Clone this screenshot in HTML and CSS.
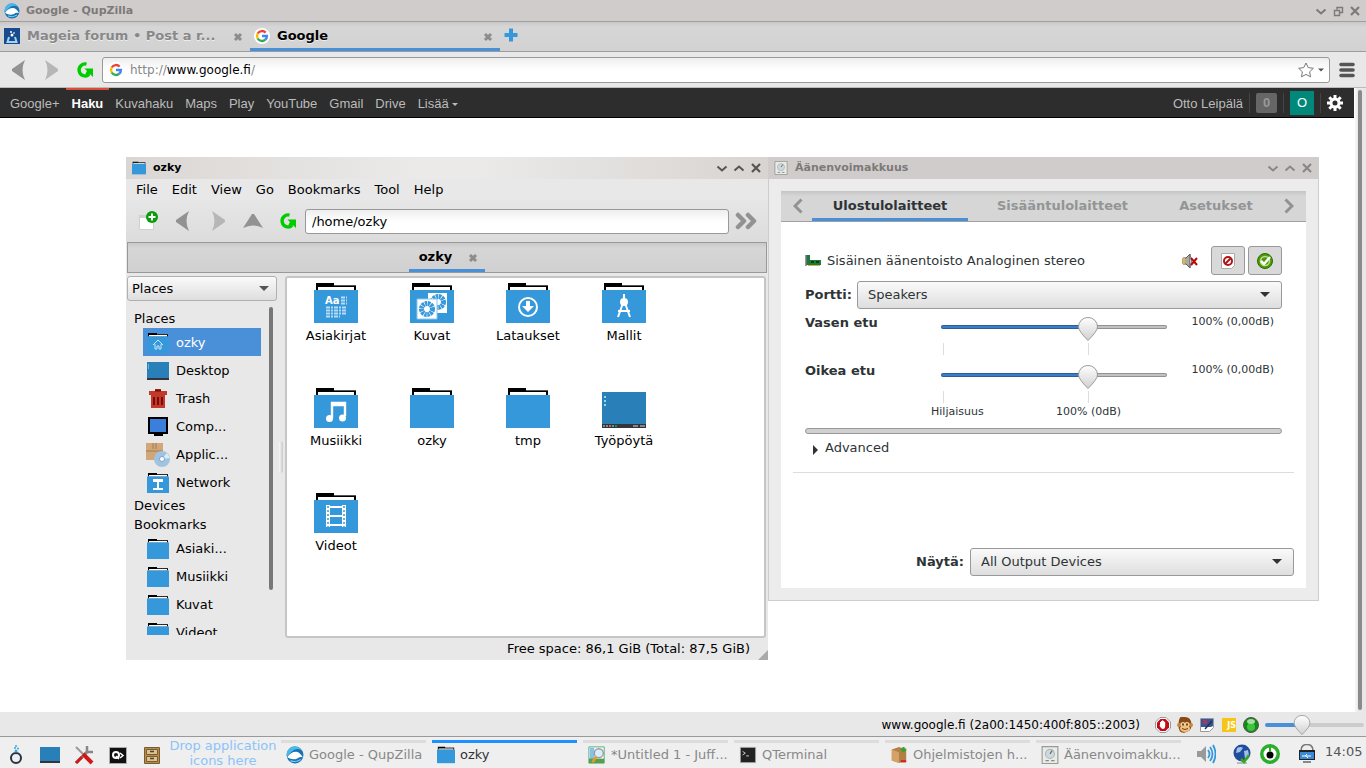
FILE: index.html
```html
<!DOCTYPE html>
<html lang="fi">
<head>
  <meta charset="UTF-8">
  <title>Google - QupZilla</title>
  <link rel="stylesheet" href="styles.css">
</head>
<body>
  <!-- shared icons -->
  <svg class="defs" width="0" height="0" aria-hidden="true">
    <symbol id="folder" viewBox="0 0 44 40">
      <path d="M2 0h18v2h22v5H2z" fill="#000"/>
      <path d="M4 4h36v3H4z" fill="#fff"/>
      <path d="M20 2h22v1H20z" fill="#555"/>
      <path d="M0 7h44v33H0z" fill="#3498db"/>
    </symbol>
    <symbol id="screen" viewBox="0 0 44 36">
      <path d="M0 0h44v36H0z" fill="#2980b9"/>
      <path d="M0 32h44v4H0z" fill="#34343c"/>
      <path d="M2 4h2v2H2zM2 8h2v2H2zM2 12h2v2H2z" fill="#8fdcdc"/>
      <path d="M1 33h2v2H1zM4 33h2v2H4zM31 33h5v2h-5zM38 33h5v2h-5z" fill="#888"/>
      <path d="M7 33h2v2H7z" fill="#e8622c"/><path d="M10 33h2v2h-2z" fill="#2c9be8"/><path d="M13 33h2v2h-2z" fill="#2a8a3a"/>
    </symbol>
    <symbol id="qupzilla" viewBox="0 0 16 16">
      <circle cx="8" cy="8" r="7.5" fill="#1673b5"/>
      <path d="M1 9A7 7 0 0 1 14 4Q9 1 5 5z" fill="#4bb8e8"/>
      <path d="M1 10Q4 5 9 5q3 0 6 5-3-1-5 1-4 2-9-1" fill="#fff"/>
      <path d="M4 13q5 2 9-1" fill="none" stroke="#7fd0ef"/>
    </symbol>
    <symbol id="google" viewBox="0 0 16 16">
      <circle cx="8" cy="8" r="8" fill="#fff"/>
      <g fill="none" stroke-width="2.4">
        <path d="M11.6 4.6A5 5 0 0 0 3.7 5.5" stroke="#ea4335"/>
        <path d="M3.7 5.5a5 5 0 0 0 0 5" stroke="#fbbc05"/>
        <path d="M3.7 10.5a5 5 0 0 0 7.6 1.2" stroke="#34a853"/>
        <path d="M11.3 11.7A5 5 0 0 0 12.9 8H8" stroke="#4285f4"/>
      </g>
    </symbol>
    <symbol id="back" viewBox="0 0 14 20"><path d="M13 0Q8 10 13 20L0 11V9z" fill="currentColor"/></symbol>
    <symbol id="forward" viewBox="0 0 14 20"><path d="M1 0q5 10 0 20l13-9V9z" fill="currentColor"/></symbol>
    <symbol id="reload" viewBox="0 0 18 18">
      <path d="M10.5 3.1A6 6 0 1 0 13 13.500" fill="none" stroke="#0c0" stroke-width="3.4"/>
      <path d="M8.500 7.500H17V16l-2.600-2.600-3.400 1-1.500-2 1.500-2.400z" fill="#0c0"/>
    </symbol>
    <symbol id="min" viewBox="0 0 12 12"><path d="M1.500 4.500 6 8.500l4.500-4" fill="none" stroke="currentColor" stroke-width="2"/></symbol>
    <symbol id="max" viewBox="0 0 12 12"><path d="M1.500 8.500 6 4.500l4.500 4" fill="none" stroke="currentColor" stroke-width="2"/></symbol>
    <symbol id="close" viewBox="0 0 12 12"><path d="m2 2 8 8m0-8-8 8" fill="none" stroke="currentColor" stroke-width="2.200"/></symbol>
    <symbol id="tabclose" viewBox="0 0 12 12"><path d="m3 3 6 6m0-6-6 6" fill="none" stroke="#8c8c8c" stroke-width="3"/></symbol>
    <symbol id="mixer" viewBox="0 0 16 16">
      <path d="M1 .5h14v15H1z" fill="#e8ece4" stroke="#999"/>
      <circle cx="8" cy="7" r="4" fill="#cdd9dd" stroke="#b0b8b8"/><path d="m8 7 2-3" stroke="#567"/>
      <path d="M4 13h3m2 0h3" stroke="#888"/>
    </symbol>
  </svg>

  <header class="titlebar">
    <svg class="i16"><use href="#qupzilla"/></svg>
    <h1>Google - QupZilla</h1>
    <div class="wbtns">
      <button aria-label="Minimize"><svg><use href="#min"/></svg></button>
      <button aria-label="Restore"><svg viewBox="0 0 12 12"><path d="M2.500 5.500h5v5h-5zM5 4.500V2.500h5.500v5H8" fill="none" stroke="currentColor" stroke-width="1.400"/></svg></button>
      <button aria-label="Close"><svg><use href="#close"/></svg></button>
    </div>
  </header>

  <nav class="tabs">
    <div class="tab">
      <svg class="i16" viewBox="0 0 16 16"><path d="M0 0h16v16H0z" fill="#194a8d"/><path d="M5 9 3.500 14h9L11 9" fill="none" stroke="#9fd4f5" stroke-width="2"/><circle cx="8" cy="7" r="1.500" fill="#fff"/><circle cx="7" cy="4" r="1" fill="#fff"/><circle cx="10" cy="5" r="1" fill="#9fd4f5"/></svg>
      <span>Mageia forum • Post a r...</span>
      <button aria-label="Close tab"><svg class="i12"><use href="#tabclose"/></svg></button>
    </div>
    <div class="tab current">
      <svg class="i16"><use href="#google"/></svg>
      <span>Google</span>
      <button aria-label="Close tab"><svg class="i12"><use href="#tabclose"/></svg></button>
    </div>
    <button class="newtab" aria-label="New tab"><svg viewBox="0 0 14 14"><path d="M7 0.500v13M0.500 7h13" stroke="#3498db" stroke-width="4"/></svg></button>
  </nav>

  <div class="navbar">
    <button class="nav" aria-label="Back"><svg class="arrow"><use href="#back"/></svg></button>
    <button class="nav off" aria-label="Forward"><svg class="arrow"><use href="#forward"/></svg></button>
    <button class="nav" aria-label="Reload"><svg class="i18"><use href="#reload"/></svg></button>
    <div class="urlbox">
      <svg class="i16"><use href="#google"/></svg>
      <a href="#" class="url"><span>http://</span>www.google.fi<span>/</span></a>
      <svg class="i16" viewBox="0 0 16 16"><path d="m8 1 2.200 4.600 5.100.7-3.700 3.500.9 5L8 12.400l-4.500 2.400.9-5L.7 6.300l5.100-.7z" fill="#fff" stroke="#777"/></svg>
      <svg class="caret" viewBox="0 0 6 4"><path d="M0 .5h6L3 3.500z" fill="#555"/></svg>
    </div>
    <button class="menu" aria-label="Menu"><svg viewBox="0 0 16 16"><path d="M2 2.500h12M2 8h12M2 13.500h12" stroke="#555" stroke-width="3.600" stroke-linecap="round"/></svg></button>
  </div>

  <div class="viewport">
    <main class="page">
      <div class="gbar">
        <a href="#">Google+</a>
        <a href="#" class="on">Haku</a>
        <a href="#">Kuvahaku</a>
        <a href="#">Maps</a>
        <a href="#">Play</a>
        <a href="#">YouTube</a>
        <a href="#">Gmail</a>
        <a href="#">Drive</a>
        <a href="#">Lisää <i class="down"></i></a>
        <a href="#" class="user">Otto Leipälä</a>
        <span class="sep"><button class="notif">0</button></span>
        <span class="sep"><button class="avatar">O</button></span>
        <span class="sep"><button class="gear" aria-label="Settings"><svg class="i16" viewBox="0 0 16 16"><circle cx="8" cy="8" r="4" fill="none" stroke="#fff" stroke-width="3"/><path d="M8 0v3m0 10v3M0 8h3m10 0h3M2.300 2.300l2.200 2.200m7 7 2.200 2.200m0-11.400-2.200 2.200m-7 7-2.200 2.200" stroke="#fff" stroke-width="3"/></svg></button></span>
      </div>

      <!-- file manager -->
      <section class="window files">
        <div class="wtitle">
          <svg class="i14"><use href="#folder"/></svg>
          <h2>ozky</h2>
          <div class="wbtns">
            <button aria-label="Minimize"><svg><use href="#min"/></svg></button>
            <button aria-label="Maximize"><svg><use href="#max"/></svg></button>
            <button aria-label="Close"><svg><use href="#close"/></svg></button>
          </div>
        </div>
        <div class="menubar">
          <button>File</button><button>Edit</button><button>View</button><button>Go</button><button>Bookmarks</button><button>Tool</button><button>Help</button>
        </div>
        <div class="toolbar">
          <button class="tool" aria-label="New tab"><svg class="i20" viewBox="0 0 20 20"><path d="M1 4h15v15H1z" fill="#d0d0d0"/><path d="M2 7h13v11H2z" fill="#fff"/><circle cx="14" cy="6" r="6" fill="#0a9d0a"/><path d="M14 2.500v7M10.500 6h7" stroke="#fff" stroke-width="2"/></svg></button>
          <button class="tool" aria-label="Back"><svg class="arrow"><use href="#back"/></svg></button>
          <button class="tool off" aria-label="Forward"><svg class="arrow"><use href="#forward"/></svg></button>
          <button class="tool" aria-label="Up"><svg class="up" viewBox="0 0 20 14"><path d="M9 0h2l9 14q-10-5-20 0z" fill="currentColor"/></svg></button>
          <button class="tool" aria-label="Reload"><svg class="i18"><use href="#reload"/></svg></button>
          <input type="text" value="/home/ozky" aria-label="Path">
          <button class="more" aria-label="Go"><svg viewBox="0 0 22 18"><path d="m3 3 6 6-6 6M13 3l6 6-6 6" fill="none" stroke="currentColor" stroke-width="4.500" stroke-linejoin="round" stroke-linecap="round"/></svg></button>
        </div>
        <div class="ftabs"><div class="ftab"><span>ozky</span><button aria-label="Close tab"><svg class="i12"><use href="#tabclose"/></svg></button></div></div>
        <div class="fbody">
          <aside class="side">
            <div class="select"><select aria-label="Side pane"><option>Places</option></select></div>
            <div class="places">
              <div class="placelist">
                <h3>Places</h3>
                <a href="#" class="picked"><svg viewBox="0 0 22 20"><use href="#folder"/><path d="m6 12 5-5 5 5m-8-1v5h2v-3h2v3h2v-5" fill="none" stroke="#cfe6f6"/></svg>ozky</a>
                <a href="#"><svg viewBox="0 0 22 20"><path d="M0 1h22v18H0z" fill="#2980b9"/><path d="M0 17h22v2H0z" fill="#34343c"/><path d="M1.500 3v5" stroke="#6bc"/></svg>Desktop</a>
                <a href="#"><svg viewBox="0 0 22 20"><path d="M8 0h6v2h6v4H2V2h6z" fill="#c0392b"/><path d="M4 6h14v13H4z" fill="#c0392b"/><path d="M7 8v8m4-8v8m4-8v8M8 1.500h6" stroke="#7b0a0a" stroke-width="2"/></svg>Trash</a>
                <a href="#"><svg viewBox="0 0 22 20"><path d="M1 0h20v17h-5v2H7v-2H1z" fill="#000"/><path d="M3 2h16v13H3z" fill="#3b7fdd"/></svg>Comp...</a>
                <a href="#"><svg class="apps" viewBox="0 0 24 24"><path d="M0 0h17v17H0z" fill="#d1a679"/><path d="M0 8h17M7 0v6m3-6v6" stroke="#a67c50"/><circle cx="16" cy="16" r="8" fill="#9fc3e0"/><path d="m16 16 5-6 3 5z" fill="#d9ecf9"/><circle cx="16" cy="16" r="2.500" fill="#fff" stroke="#7ba4c6"/></svg>Applic...</a>
                <a href="#"><svg viewBox="0 0 22 20"><use href="#folder"/><path d="M6 6h10v3H6zM10 9h2v6h4v2H6v-2h4z" fill="#fff"/></svg>Network</a>
                <h3>Devices</h3>
                <h3>Bookmarks</h3>
                <a href="#"><svg><use href="#folder"/></svg>Asiaki...</a>
                <a href="#"><svg><use href="#folder"/></svg>Musiikki</a>
                <a href="#"><svg><use href="#folder"/></svg>Kuvat</a>
                <a href="#"><svg><use href="#folder"/></svg>Videot</a>
              </div>
              <div class="sidebar-scroll"></div>
            </div>
          </aside>
          <div class="splitter"></div>
          <div class="pane">
            <a href="#"><svg viewBox="0 0 44 40"><use href="#folder"/><text x="11" y="21" class="glyph">Aa</text><path d="M12 24.500h20M12 27.500h20M12 30.500h20M12 33.500h14M27 14.500h6M27 17.500h6M27 20.500h6" stroke="#b9dcf3" stroke-dasharray="4 1 2 1" stroke-width="2"/></svg>Asiakirjat</a>
            <a href="#"><svg viewBox="0 0 44 40"><use href="#folder"/><path d="M18 10h19v20H18z" fill="#fff"/><circle cx="28" cy="19" r="5.500" fill="none" stroke="#3498db" stroke-width="5" stroke-dasharray="2.300 .6"/><path d="M7 16h20v20H7z" fill="#fff" stroke="#8cc5ec"/><circle cx="17" cy="26" r="5.500" fill="none" stroke="#3498db" stroke-width="5" stroke-dasharray="2.300 .6"/></svg>Kuvat</a>
            <a href="#"><svg viewBox="0 0 44 40"><use href="#folder"/><circle cx="22" cy="24" r="9" fill="none" stroke="#fff" stroke-width="2"/><path d="M20 18h4v5h4l-6 6-6-6h4z" fill="#fff"/></svg>Lataukset</a>
            <a href="#"><svg viewBox="0 0 44 40"><use href="#folder"/><path d="M22 11v5M21 20l-5 14m7-14 5 14M16 28h12" fill="none" stroke="#fff" stroke-width="2"/><circle cx="22" cy="19" r="4" fill="#fff"/></svg>Mallit</a>
            <a href="#"><svg viewBox="0 0 44 40"><use href="#folder"/><path d="M18 30V15h13v13M18 17h13" fill="none" stroke="#fff" stroke-width="2.400"/><circle cx="15.500" cy="30.500" r="3.500" fill="#fff"/><circle cx="28.500" cy="30" r="3.500" fill="#fff"/></svg>Musiikki</a>
            <a href="#"><svg><use href="#folder"/></svg>ozky</a>
            <a href="#"><svg><use href="#folder"/></svg>tmp</a>
            <a href="#"><svg viewBox="0 0 44 40"><use href="#screen" y="4" height="36"/></svg>Työpöytä</a>
            <a href="#"><svg viewBox="0 0 44 40"><use href="#folder"/><path d="M14 12v22m16-22v22" stroke="#fff" stroke-width="4"/><path d="M14 14h16M14 23h16M14 32h16" stroke="#fff" stroke-width="2"/><path d="M14 13v22m16-22v22" stroke="#3498db" stroke-width="1.500" stroke-dasharray="2"/></svg>Videot</a>
          </div>
        </div>
        <footer class="fstatus">Free space: 86,1 GiB (Total: 87,5 GiB)<svg viewBox="0 0 12 12"><path d="M12 0v12H0z" fill="#aaa"/></svg></footer>
      </section>

      <!-- volume control -->
      <section class="window volume">
        <div class="wtitle">
          <svg class="i14"><use href="#mixer"/></svg>
          <h2>Äänenvoimakkuus</h2>
          <div class="wbtns">
            <button aria-label="Minimize"><svg><use href="#min"/></svg></button>
            <button aria-label="Maximize"><svg><use href="#max"/></svg></button>
            <button aria-label="Close"><svg><use href="#close"/></svg></button>
          </div>
        </div>
        <div class="vpanel">
          <div class="vtabs">
            <button class="prev" aria-label="Previous"><svg viewBox="0 0 10 16"><path d="M8.500 1.500 2 8l6.500 6.500" fill="none" stroke="currentColor" stroke-width="3"/></svg></button>
            <button class="vtab on">Ulostulolaitteet</button>
            <button class="vtab">Sisääntulolaitteet</button>
            <button class="vtab last">Asetukset</button>
            <button class="next" aria-label="Next"><svg viewBox="0 0 10 16"><path d="M1.500 1.500 8 8l-6.500 6.500" fill="none" stroke="currentColor" stroke-width="3"/></svg></button>
          </div>
          <div class="device">
            <div class="dhead">
              <svg class="i16" viewBox="0 0 16 16"><path d="M1 2h4v5h11v5H1z" fill="#1b7a3c"/><path d="M1 2v11" stroke="#777" stroke-width="1.500"/><path d="M3 12.500h12" stroke="#d5b23c"/><path d="M6 9h3m2 0h3" stroke="#0a3d1c" stroke-width="2"/></svg>
              <span>Sisäinen äänentoisto Analoginen stereo</span>
              <svg class="i16 mute" viewBox="0 0 16 16"><path d="M1 5h3l4-4v14l-4-4H1z" fill="#aaa" stroke="#555"/><path d="M1 5h2v6H1z" fill="#f0b429"/><path d="M8 1q3 7 0 14" fill="#ddd" stroke="#777"/><path d="m9 5 6 7m0-7-6 7" stroke="#b00d0d" stroke-width="2"/></svg>
              <button class="toggle" aria-label="Mute"><svg class="i16" viewBox="0 0 16 16"><path d="M1.500.5h13v12l-3 3h-10z" fill="#fff" stroke="#aaa"/><circle cx="8" cy="8" r="4" fill="#fff" stroke="#b01515" stroke-width="2"/><path d="m5 11 6-6" stroke="#b01515" stroke-width="2"/></svg></button>
              <button class="toggle" aria-label="Set as fallback"><svg class="i16" viewBox="0 0 16 16"><circle cx="8" cy="8" r="7.500" fill="#4e9a06" stroke="#2c6a05"/><circle cx="8" cy="8" r="4.500" fill="none" stroke="#b7dd92" stroke-width="1.500"/><path d="m4 8 3 3 6-7" fill="none" stroke="#fff" stroke-width="2.500"/></svg></button>
            </div>
            <div class="port">
              <label for="port">Portti:</label>
              <div class="select"><select id="port"><option>Speakers</option></select></div>
            </div>
            <div class="channel">
              <label for="left">Vasen etu</label>
              <div class="scale"><input type="range" id="left" max="200" value="133"></div>
              <output>100% (0,00dB)</output>
            </div>
            <div class="channel">
              <label for="right">Oikea etu</label>
              <div class="scale"><input type="range" id="right" max="200" value="133"></div>
              <output>100% (0,00dB)</output>
            </div>
            <div class="marks"><span>Hiljaisuus</span><span>100% (0dB)</span></div>
            <div class="level"></div>
            <button class="advanced"><svg viewBox="0 0 5 10"><path d="m0 0 5 5-5 5z" fill="#2e3436"/></svg>Advanced</button>
          </div>
          <div class="show">
            <label for="show">Näytä:</label>
            <div class="select"><select id="show"><option>All Output Devices</option></select></div>
          </div>
        </div>
      </section>
    </main>
    <div class="scrollbar"></div>
  </div>

  <footer class="statusbar">
    <span>www.google.fi (2a00:1450:400f:805::2003)</span>
    <svg class="i16" viewBox="0 0 16 16"><path d="M5 .5h6L15.500 5v6L11 15.500H5L.5 11V5z" fill="#fff" stroke="#999"/><path d="M5.500 2h5L14 5.500v5L10.500 14h-5L2 10.500v-5z" fill="#c00d1a"/><path d="M5 8V5h1V4h1.200V3.200h1V4h1v1h1v4q0 3-2.500 3Q6 12 4.500 8.500z" fill="#fff"/></svg>
    <svg class="i16" viewBox="0 0 16 16"><path d="M8 0q6 0 6.500 7T8 15.500 1.500 7 8 0" fill="#8a4a18"/><circle cx="2" cy="8" r="2" fill="#c68642"/><circle cx="14" cy="8" r="2" fill="#c68642"/><circle cx="6" cy="7.500" r="2.500" fill="#f5d08e"/><circle cx="10" cy="7.500" r="2.500" fill="#f5d08e"/><ellipse cx="8" cy="11.500" rx="5" ry="3.500" fill="#f0c27b"/><path d="M6 6.500v2m4-2v2" stroke="#222" stroke-width="1.500"/><path d="M5 11.500q3 2 6 0" fill="none" stroke="#733"/></svg>
    <svg class="i16" viewBox="0 0 16 16"><path d="M1.500 1.500h13v9l-4 4h-9z" fill="#fff" stroke="#999"/><path d="M2 2h12v7l-2 1H2z" fill="#38549c"/><path d="M4 3h4v4H4z" fill="#a33b5b"/><path d="m6 12 7-8" stroke="#234" stroke-width="1.500"/></svg>
    <b class="js">JS</b>
    <svg class="i16" viewBox="0 0 16 16"><circle cx="8" cy="8" r="7.500" fill="#158a15" stroke="#555"/><circle cx="8" cy="10" r="4" fill="#3fc43f"/><ellipse cx="8" cy="4.500" rx="4" ry="2.500" fill="#a5dfa5"/></svg>
    <input type="range" class="zoom" value="34" aria-label="Zoom">
  </footer>

  <div class="taskbar">
    <div class="launch">
      <button aria-label="Start"><svg viewBox="0 0 20 20"><circle cx="10" cy="13" r="5" fill="none" stroke="#262f45" stroke-width="2"/><circle cx="10" cy="6" r="1.500" fill="#38a9dd"/><circle cx="9" cy="3" r="1" fill="#38a9dd"/><circle cx="12" cy="3.500" r="1" fill="#38a9dd"/><circle cx="10" cy="1" r="1" fill="#38a9dd"/></svg></button>
      <button aria-label="Show desktop"><svg viewBox="0 0 20 20"><path d="M0 2h20v16H0z" fill="#2980b9"/><path d="M0 16h20v2H0z" fill="#34343c"/></svg></button>
      <button aria-label="Tools"><svg viewBox="0 0 20 20"><path d="m2 18 12-12" stroke="#888" stroke-width="3"/><path d="M13 1v6h6" fill="none" stroke="#888" stroke-width="2.500"/><path d="m2 2 8 8" stroke="#999" stroke-width="2"/><path d="m9 9 9 9" stroke="#d01818" stroke-width="4"/><path d="m2 18 6-6" stroke="#d01818" stroke-width="3"/></svg></button>
      <button aria-label="QTerminal"><svg viewBox="0 0 20 20"><path d="M1 2h18v17H1z" fill="#aaa"/><path d="M2 3h16v15H2z" fill="#111"/><circle cx="8" cy="10" r="3" fill="none" stroke="#fff" stroke-width="2"/><path d="m8 11 3 3m1-6 3 2.500-3 2.500" fill="none" stroke="#fff" stroke-width="1.500"/></svg></button>
      <button aria-label="Files"><svg viewBox="0 0 20 20"><path d="M2.500 2.500h15v16h-15z" fill="#b18d55" stroke="#7b5c2d"/><path d="M4.500 4.500h11v5h-11zm0 7h11v5h-11z" fill="#dfc28c" stroke="#7b5c2d"/><path d="M8 6.500h4m-4 7h4" stroke="#444" stroke-width="1.500"/></svg></button>
    </div>
    <p class="drop">Drop application icons here</p>
    <div class="tasks">
      <button class="task"><svg><use href="#qupzilla"/></svg>Google - QupZilla</button>
      <button class="task on"><svg><use href="#folder"/></svg>ozky</button>
      <button class="task"><svg viewBox="0 0 20 20"><path d="M1 1h17v18H1z" fill="#fff" stroke="#4a7"/><path d="M2 2h5v16H2z" fill="#87c1e8"/><path d="M1 14h17v5H1z" fill="#5a9e4a"/><circle cx="12" cy="8" r="5" fill="#d9ecfa" stroke="#999" stroke-width="1.500"/><path d="m9 12-4 6" stroke="#e39a2c" stroke-width="3"/></svg>*Untitled 1 - Juff...</button>
      <button class="task"><svg viewBox="0 0 20 20"><path d="M1 1h18v18H1z" fill="#bbb"/><path d="M2 2h16v16H2z" fill="#222"/><path d="m4 6 3 2-3 2m4 1h3" fill="none" stroke="#ddd"/></svg>QTerminal</button>
      <button class="task"><svg viewBox="0 0 20 20"><path d="m2 4 8-3 8 3v12l-8 3-8-3z" fill="#b37f43"/><path d="m2 4 8 3v12l-8-3z" fill="#d3a265"/><path d="M15 1v6m-3-3h6" stroke="#30a530" stroke-width="2.500"/><path d="M12 17h6" stroke="#c22" stroke-width="2.500"/></svg>Ohjelmistojen h...</button>
      <button class="task"><svg><use href="#mixer"/></svg>Äänenvoimakku...</button>
    </div>
    <div class="tray">
      <svg viewBox="0 0 20 20"><path d="M1 7h4l5-5v16l-5-5H1z" fill="#999"/><path d="M12 6q3 4 0 8m2-11q5 7 0 14m3-16q5 9 0 18" fill="none" stroke="#3498db" stroke-width="1.800"/></svg>
      <svg viewBox="0 0 20 20"><circle cx="10" cy="9" r="8.500" fill="#1f4c9d"/><path d="M5 4q4-2 6 0l-3 4-4 1zM12 7l4-1 1 5-4 4z" fill="#9fc0ea"/><path d="M5 19h10" stroke="#bbb" stroke-width="2"/><path d="m9 15 3 3 5-7" fill="none" stroke="#36a81e" stroke-width="2.500"/></svg>
      <svg viewBox="0 0 20 20"><circle cx="10" cy="10" r="10" fill="#2cae2c"/><circle cx="10" cy="10" r="6.500" fill="#fff"/><circle cx="10" cy="11" r="3.500" fill="#000"/><path d="M10 2v6" stroke="#2cae2c" stroke-width="2"/></svg>
      <svg viewBox="0 0 20 20"><path d="M4 7q0-6.500 6-6.500T16 7" fill="#eee" stroke="#777" stroke-width="1.500"/><path d="M2 6h16v10H2z" fill="#222"/><path d="M3 8h14v7H3z" fill="#3889d6"/><path d="M5 12h9m-6 0 2-2m-1 2 2 2" stroke="#fff"/><path d="M6 18h8" stroke="#888" stroke-width="2"/></svg>
      <time>14:05</time>
    </div>
  </div>
</body>
</html>
```
FILE: styles.css
```css
* {
  box-sizing: border-box;
}
body {
  margin: 0;
  height: 100vh;
  display: flex;
  flex-direction: column;
  overflow: hidden;
  background: #e8e8e8;
  color: #000;
  font: 13px/16px "DejaVu Sans", sans-serif;
}
h1, h2, h3, p {
  margin: 0;
  font: inherit;
}
a {
  color: inherit;
  text-decoration: none;
}
button, input, select {
  font: inherit;
  color: inherit;
  margin: 0;
}
button {
  padding: 0;
  border: 0;
  background: none;
}
svg {
  display: block;
  flex: none;
}
.defs { position: absolute; }
.i12 { width: 12px; height: 12px; }
.i14 { width: 14px; height: 14px; }
.i16 { width: 16px; height: 16px; }
.i18 { width: 18px; height: 18px; }
.i20 { width: 20px; height: 20px; }

/* browser chrome */
.titlebar {
  height: 22px;
  display: flex;
  align-items: center;
  padding: 0 5px 0 4px;
  background: #d0cccb;
  border-bottom: 1px solid #a0a0a0;
  color: #7c7a79;
}
.titlebar h1, .wtitle h2 {
  flex: 1;
  margin-left: 6px;
  font-size: 11px;
  font-weight: bold;
}
.wbtns {
  display: flex;
  gap: 5px;
}
.wbtns svg {
  width: 12px;
  height: 12px;
}
.tabs {
  height: 30px;
  display: flex;
  background: linear-gradient(#c8c8c8, #d6d6d6 5px, #d2d2d2);
  border-bottom: 1px solid #9c9c9c;
}
.tab {
  width: 250px;
  padding: 0 6px 0 4px;
  display: flex;
  align-items: center;
  border-bottom: 3px solid transparent;
  color: #888;
  font-weight: bold;
  text-shadow: 0 1px #eee;
}
.tab span {
  flex: 1;
  padding-top: 2px;
  margin-left: 7px;
}
.tab button {
  padding-top: 4px;
}
.tab > svg {
  margin-top: 2px;
}
.tab.current {
  color: #000;
  border-bottom-color: #4a90d9;
}
.newtab {
  margin: 0 0 4px 4px;
}
.newtab svg {
  width: 14px;
  height: 14px;
}
.navbar {
  height: 36px;
  display: flex;
  align-items: center;
  padding-right: 11px;
  border-bottom: 1px solid #bbb;
}
.nav {
  width: 34px;
  display: grid;
  place-items: center;
  color: #929292;
}
.nav:first-child {
  padding-left: 4px;
}
.off { color: #b6b6b6; }
.arrow {
  width: 14px;
  height: 20px;
}
.urlbox {
  flex: 1;
  height: 26px;
  display: flex;
  align-items: center;
  padding: 0 5px;
  border: 1px solid #999;
  border-radius: 3px;
  background: linear-gradient(#eee, #fff 12px);
}
.url {
  flex: 1;
  margin-left: 6px;
  font-size: 12px;
}
.url span { color: #888; }
.caret {
  width: 6px;
  height: 4px;
  margin-left: 4px;
}
.menu { margin-left: 9px; }
.menu svg {
  width: 16px;
  height: 16px;
}
.viewport {
  flex: 1;
  display: flex;
  min-height: 0;
}
.page {
  flex: 1;
  position: relative;
  background: #fff;
}
.scrollbar {
  width: 12px;
  padding: 2px 4px;
  background: linear-gradient(90deg, #fff, #e8e8e8 4px);
}
.scrollbar::before {
  content: "";
  display: block;
  height: 100%;
  border-radius: 2px;
  background: #8a8a8a;
}
.gbar {
  height: 30px;
  display: flex;
  padding: 0 5px 0 4px;
  background: #2d2d2d;
  border-bottom: 1px solid #000;
  color: #bbb;
  font: 13px/28px "Liberation Sans", sans-serif;
}
.gbar a {
  padding: 0 6px;
  border-top: 2px solid transparent;
}
.gbar a.on {
  color: #fff;
  font-weight: bold;
  border-top-color: #dd4b39;
}
.gbar a.user {
  margin-left: auto;
}
.down {
  display: inline-block;
  border: 3px solid transparent;
  border-top-color: #bbb;
  border-bottom: 0;
  vertical-align: 2px;
}
.sep {
  height: 20px;
  margin-top: 5px;
  padding: 0 6px;
  display: flex;
  align-items: center;
  border-left: 1px solid #444;
}
.notif {
  width: 21px;
  height: 20px;
  border-radius: 2px;
  background: #666;
  color: #999;
  font-weight: bold;
  line-height: 20px;
}
.avatar {
  width: 24px;
  height: 24px;
  background: #00897b;
  color: #fff;
  line-height: 24px;
}

/* windows */
.window {
  position: absolute;
  top: 69px;
  display: flex;
  flex-direction: column;
}
.wtitle {
  height: 22px;
  flex: none;
  display: flex;
  align-items: center;
  padding: 0 6px;
}
.wtitle h2 {
  margin-left: 7px;
}
.files {
  left: 126px;
  width: 642px;
  height: 503px;
  background: #e8e8e8;
}
.files .wtitle {
  background: linear-gradient(90deg, #dad6d3, #ebeae9 45%, #ebeae9 55%, #d8d4d1);
}
.files .wbtns { color: #555; }
.menubar {
  display: flex;
  height: 21px;
  padding-left: 10px;
  gap: 14px;
}
.toolbar {
  height: 42px;
  display: flex;
  align-items: center;
  padding-left: 4px;
  background: linear-gradient(#e6e6e6, #dcdcdc);
}
.tool {
  width: 35px;
  display: grid;
  place-items: center;
  color: #929292;
}
.tool.off { color: #b6b6b6; }
.up {
  width: 20px;
  height: 14px;
}
.toolbar input {
  flex: 1;
  height: 25px;
  padding: 0 6px;
  border: 1px solid #999;
  border-radius: 3px;
  background: linear-gradient(#eee, #fff 12px);
}
.more {
  padding: 0 11px 0 6px;
  color: #929292;
}
.more svg {
  width: 22px;
  height: 18px;
}
.ftabs {
  height: 31px;
  display: flex;
  justify-content: center;
  margin: 0 1px;
  border: 1px solid #999;
  background: linear-gradient(#c8c8c8, #d6d6d6 5px, #d0d0d0);
}
.ftab {
  display: flex;
  align-items: center;
  gap: 15px;
  padding: 2px 6px 0 10px;
  border-bottom: 3px solid #4a90d9;
  font-weight: bold;
}
.ftab button {
  padding-top: 2px;
}
.fbody {
  flex: 1;
  min-height: 0;
  display: flex;
  padding: 3px 2px 0 1px;
}
.side {
  width: 150px;
  display: flex;
  flex-direction: column;
}
.select {
  position: relative;
}
.select select {
  width: 100%;
  height: 28px;
  padding: 0 10px;
  appearance: none;
  border: 1px solid #999;
  border-radius: 3px;
  background: linear-gradient(#fafafa, #dedede);
}
.select::after {
  content: "";
  position: absolute;
  right: 12px;
  top: 11px;
  border: 5px solid transparent;
  border-top-color: #2e3436;
  border-bottom: 0;
  pointer-events: none;
}
.side .select select {
  height: 25px;
  padding: 0 4px;
  border-color: #b0b0b0;
}
.side .select::after {
  right: 8px;
  top: 10px;
  border-top-color: #555;
}
.places {
  flex: 1;
  min-height: 0;
  display: flex;
  justify-content: space-between;
  padding: 6px 4px 0 7px;
  margin-bottom: 3px;
}
.placelist {
  width: 127px;
  overflow: hidden;
  padding-top: 2px;
}
.placelist h3 {
  line-height: 19px;
}
.placelist a {
  height: 28px;
  display: flex;
  align-items: center;
  gap: 7px;
  margin-left: 9px;
  padding: 1px 0 0 4px;
}
.placelist svg {
  width: 22px;
  height: 20px;
}
.placelist .apps {
  width: 24px;
  height: 24px;
  margin: 0 -1px;
}
.placelist .picked {
  background: #4a90d9;
  color: #fff;
}
.sidebar-scroll {
  width: 4px;
  height: 283px;
  border-radius: 2px;
  background: #777;
}
.splitter {
  width: 8px;
  display: flex;
  align-items: center;
  justify-content: center;
}
.splitter::before {
  content: "";
  width: 4px;
  height: 32px;
  border-radius: 2px;
  background: linear-gradient(90deg, #f8f8f8, #c8c8c8);
}
.pane {
  flex: 1;
  display: grid;
  grid-template-columns: repeat(auto-fill, 96px);
  grid-auto-rows: 105px;
  padding: 5px 0 0 1px;
  border: 2px solid #c6c6c6;
  border-radius: 3px;
  background: #fff;
}
.pane a {
  display: flex;
  flex-direction: column;
  align-items: center;
  gap: 5px;
}
.pane svg {
  width: 44px;
  height: 40px;
}
.glyph {
  fill: #fff;
  font-size: 10px;
  font-weight: bold;
}
.fstatus {
  height: 22px;
  display: flex;
  justify-content: flex-end;
  align-items: center;
}
.fstatus svg {
  width: 10px;
  height: 10px;
  margin-left: 8px;
  align-self: flex-end;
}

/* volume control */
.volume {
  left: 768px;
  width: 551px;
  height: 444px;
  border: 1px solid #d0cccb;
  border-top: 0;
  background: #ececec;
  color: #2e3436;
}
.volume .wtitle {
  padding: 0 5px;
  background: #d0cccb;
  color: #7c7a79;
}
.volume .wbtns { color: #8a8887; }
.vpanel {
  flex: 1;
  display: flex;
  flex-direction: column;
  margin: 12px;
  background: #fff;
}
.vtabs {
  height: 31px;
  display: flex;
  background: linear-gradient(#c4c4c4, #d6d6d6 5px);
  border-bottom: 1px solid #a0a0a0;
  color: #929595;
}
.vtabs svg {
  width: 10px;
  height: 16px;
}
.prev {
  padding: 0 9px 0 12px;
  color: #929292;
}
.next {
  padding: 0 12px 0 9px;
  color: #929292;
}
.vtab {
  flex: 1;
  padding-top: 3px;
  font-weight: bold;
  border-bottom: 3px solid transparent;
}
.vtab.last {
  flex: none;
  width: 118px;
}
.vtab.on {
  flex: none;
  width: 156px;
  color: #2e3436;
  border-bottom-color: #4a90d9;
}
.device {
  display: flex;
  flex-direction: column;
  margin: 0 12px;
  padding: 24px 12px 0;
  height: 251px;
  border-bottom: 1px solid #ddd;
}
.dhead {
  display: flex;
  align-items: center;
  gap: 3px;
}
.dhead span {
  margin-left: 3px;
}
.mute {
  margin: 0 10px 0 auto;
}
.toggle {
  width: 34px;
  height: 29px;
  display: grid;
  place-items: center;
  border: 1px solid #999;
  border-radius: 3px;
  background: #d9d9d9;
}
.port {
  display: flex;
  align-items: center;
  gap: 5px;
  margin: 6px 0 5px;
}
label { font-weight: bold; }
.port .select { flex: 1; }
.channel {
  display: grid;
  grid-template-columns: 1fr 226px 115px;
  height: 48px;
}
.channel label {
  padding-top: 1px;
}
.channel output {
  padding-right: 8px;
  text-align: right;
  font-size: 11px;
}
/* tick marks under the trough */
.scale {
  height: 41px;
  padding-top: 1px;
  background:
    linear-gradient(#ddd, #ddd) 2px 100% / 1px 12px no-repeat,
    linear-gradient(#ddd, #ddd) 147px 100% / 1px 12px no-repeat;
}
input[type="range"] {
  display: block;
  width: 100%;
  height: 24px;
  appearance: none;
  background: none;
}
input[type="range"]::-webkit-slider-runnable-track {
  height: 4px;
  border-radius: 2px;
  background: linear-gradient(90deg, #3c7fc8 65%, #c2c2c2 65%);
  box-shadow: inset 0 0 0 1px rgba(0, 0, 0, 0.25);
}
input[type="range"]::-webkit-slider-thumb {
  appearance: none;
  width: 20px;
  height: 24px;
  margin-top: -8px;
  background: url("data:image/svg+xml,%3Csvg xmlns='http://www.w3.org/2000/svg' viewBox='0 0 20 24'%3E%3ClinearGradient id='g' x2='0' y2='1'%3E%3Cstop stop-color='%23fff'/%3E%3Cstop offset='1' stop-color='%23d0d0d0'/%3E%3C/linearGradient%3E%3Cpath d='M10 .5A9.300 9.300 0 0 1 19.500 10Q19.500 14 10 23.500.5 14 .5 10A9.300 9.300 0 0 1 10 .5z' fill='url(%23g)' stroke='%23999'/%3E%3C/svg%3E") center / 100% 100% no-repeat;
}
.marks {
  display: grid;
  grid-template-columns: 125px 1fr;
  height: 17px;
  margin-top: -6px;
  padding-left: 126px;
  font-size: 11px;
}
.level {
  height: 6px;
  flex: none;
  margin: 7px 0 6px;
  border: 1px solid #999;
  border-radius: 3px;
  background: #d0d0d0;
}
.advanced {
  display: flex;
  align-items: center;
  gap: 7px;
  padding-left: 8px;
}
.advanced svg {
  width: 5px;
  height: 10px;
  margin-top: 4px;
}
.show {
  display: flex;
  justify-content: flex-end;
  align-items: center;
  gap: 6px;
  margin: auto 12px 12px;
}
.show .select { width: 324px; }

/* status bar and panel */
.statusbar {
  height: 25px;
  flex: none;
  display: flex;
  align-items: center;
  justify-content: flex-end;
  gap: 6px;
  padding: 2px 2px 0 0;
  border-bottom: 1px solid #999;
}
.statusbar span {
  margin-right: 9px;
  font-size: 12px;
}
.js {
  width: 14px;
  height: 14px;
  margin: 0 1px;
  background: #f5c518;
  color: #fff;
  font-size: 8px;
  text-align: right;
}
.statusbar .zoom {
  width: 99px;
  height: 20px;
}
.statusbar .zoom::-webkit-slider-runnable-track {
  background: linear-gradient(90deg, #4a90d9 36%, #ccc 36%);
  box-shadow: none;
}
.statusbar .zoom::-webkit-slider-thumb {
  width: 18px;
  height: 20px;
}
.taskbar {
  height: 31px;
  flex: none;
  display: flex;
  background: #efefef;
  color: #888;
}
.launch {
  display: flex;
  gap: 14px;
  padding: 4px 0 0 6px;
}
.launch svg {
  width: 20px;
  height: 20px;
}
.launch button { align-self: center; }
.drop {
  width: 112px;
  margin: 1px 2px 0 5px;
  color: #8cc3fa;
  line-height: 15px;
  text-align: center;
}
.tasks {
  flex: 1;
  display: flex;
  gap: 6px;
  padding-top: 3px;
}
.task {
  flex: 1;
  max-width: 145px;
  display: flex;
  align-items: center;
  gap: 5px;
  padding: 0 0 2px 5px;
  border-top: 3px solid #dcdcdc;
  white-space: nowrap;
}
.task svg {
  width: 18px;
  height: 18px;
}
.task.on {
  color: #333;
  border-top-color: #1e90ff;
}
.tray {
  width: 184px;
  display: flex;
  align-items: center;
  gap: 8px;
  padding: 2px 4px 0 14px;
}
.tray svg {
  width: 20px;
  height: 20px;
}
.tray svg:first-child {
  margin-right: 8px;
}
.tray svg:nth-child(3) {
  margin-right: 9px;
}
.tray time {
  margin: 0 0 4px auto;
  color: #555;
}
```
